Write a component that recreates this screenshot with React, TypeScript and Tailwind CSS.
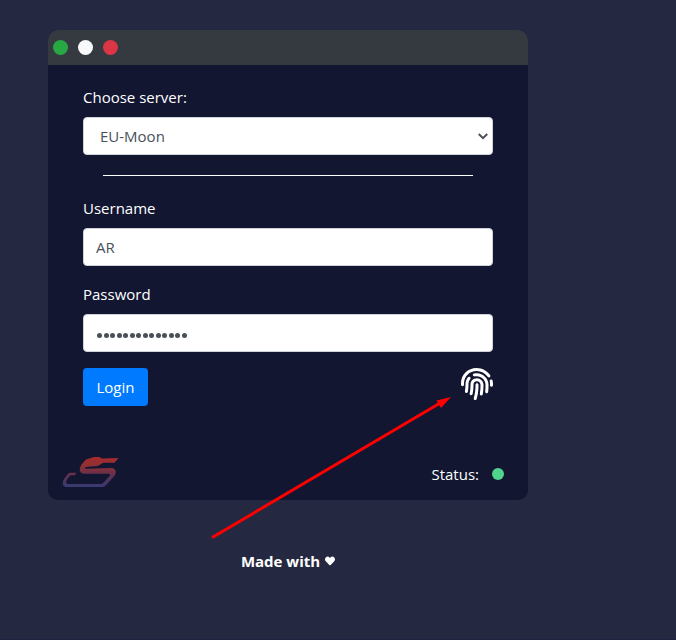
import { FaFingerprint, FaHeart } from "react-icons/fa";

const label = "block h-6 text-[15px] leading-6 text-white whitespace-nowrap";
const field =
  "flex h-[38px] w-full items-center rounded-[4px] border border-[#ced4da] bg-white pl-3 text-[15px] text-[#495057]";

function SleighLogo() {
  return (
    <svg width="60" height="34" viewBox="0 0 60 34" className="block">
      <defs>
        <linearGradient id="sleigh" x1="0" y1="0" x2="0" y2="1">
          <stop offset="0" stopColor="#a72b2b" />
          <stop offset="0.3" stopColor="#8f3035" />
          <stop offset="0.6" stopColor="#62304f" />
          <stop offset="1" stopColor="#363a73" />
        </linearGradient>
      </defs>
      <path
        fill="url(#sleigh)"
        d="M57.5 3 L40.5 3.6 L38.5 2 H33 L25 4.4 L20.5 9.5 L18.8 13.2 Q18.3 18.6 23 18.7 H47.3 Q50 19 48.6 21 L42.4 27.8 Q41.2 29 39.5 29 H6.5 Q4.5 28.4 5.5 25.5 L8.2 21.5 Q9 20.2 11 20.2 H14 L15.2 17.8 H9.5 Q7.5 18 6.2 19.8 L2.4 25 Q.4 31.2 4.8 31.9 H41.5 Q43.6 31.8 45 30.2 L53.8 20.5 Q56.8 15 51.5 13 L24.6 13.8 Q23 13.5 24.4 12.1 L36.5 11 L42.5 7.7 H53.5 Z"
      />
    </svg>
  );
}

export default function App() {
  return (
    <div className="relative h-[640px] w-[676px] overflow-hidden border-b border-[#1e2140] bg-[#242841] pl-12 pt-[30px] font-['Open_Sans','Noto_Sans',sans-serif]">
      <main className="flex h-[470px] w-[480px] flex-col overflow-hidden rounded-[10px] bg-[#121631]">
        <header className="flex h-[35px] shrink-0 items-center gap-[10px] bg-[#343a40] pl-[5px]">
          <span className="size-[15px] rounded-full bg-[#28a745]" />
          <span className="size-[15px] rounded-full bg-[#f8f9fa]" />
          <span className="size-[15px] rounded-full bg-[#dc3545]" />
        </header>

        <form className="flex flex-col px-[35px] pt-5">
          <label className={label}>Choose server:</label>
          <div className={field + " mt-2 justify-between pr-1"}>
            <span className="pl-1">EU-Moon</span>
            <svg width="10" height="7" viewBox="0 0 10 7" fill="none" stroke="#495057" strokeWidth="2">
              <path d="M.8 1 L5 5.1 L9.2 1" />
            </svg>
          </div>
          <hr className="mx-5 my-5 border-t border-white" />
          <label className={label}>Username</label>
          <div className={field + " mt-2"}>AR</div>
          <label className={label + " mt-4"}>Password</label>
          <div className={field + " mt-2"}>
            <span className="flex gap-[1.5px] pt-1 pl-px">
              {Array.from({ length: 14 }, (_, i) => (
                <span key={i} className="size-[5px] rounded-full bg-[#495057]" />
              ))}
            </span>
          </div>
          <div className="mt-4 flex items-start justify-between">
            <button type="button" className="h-[38px] w-[65px] rounded-[4px] bg-[#007bff] text-[15px] text-white">
              Login
            </button>
            <FaFingerprint className="size-8 text-white" />
          </div>
        </form>

        <footer className="mt-auto flex h-[52px] items-center justify-between pl-[13px] pr-6">
          <div className="pb-1">
            <SleighLogo />
          </div>
          <div className="flex items-center gap-[13px]">
            <span className="text-[15px] leading-6 text-white">Status:</span>
            <span className="size-3 rounded-full bg-[#4fd38d]" />
          </div>
        </footer>
      </main>

      <p className="flex w-[480px] items-center justify-center gap-[5px] pt-[49px] text-[15px] font-bold leading-6 text-white">
        Made with <FaHeart className="size-[10px]" />
      </p>

      <svg className="absolute left-0 top-0" width="676" height="640" viewBox="0 0 676 640">
        <path d="M213 537 L441 402.5" stroke="#ff0000" strokeWidth="3" strokeLinecap="round" />
        <path d="M451 397 L436.5 400.5 L441 408 Z" fill="#ff0000" />
      </svg>
    </div>
  );
}
